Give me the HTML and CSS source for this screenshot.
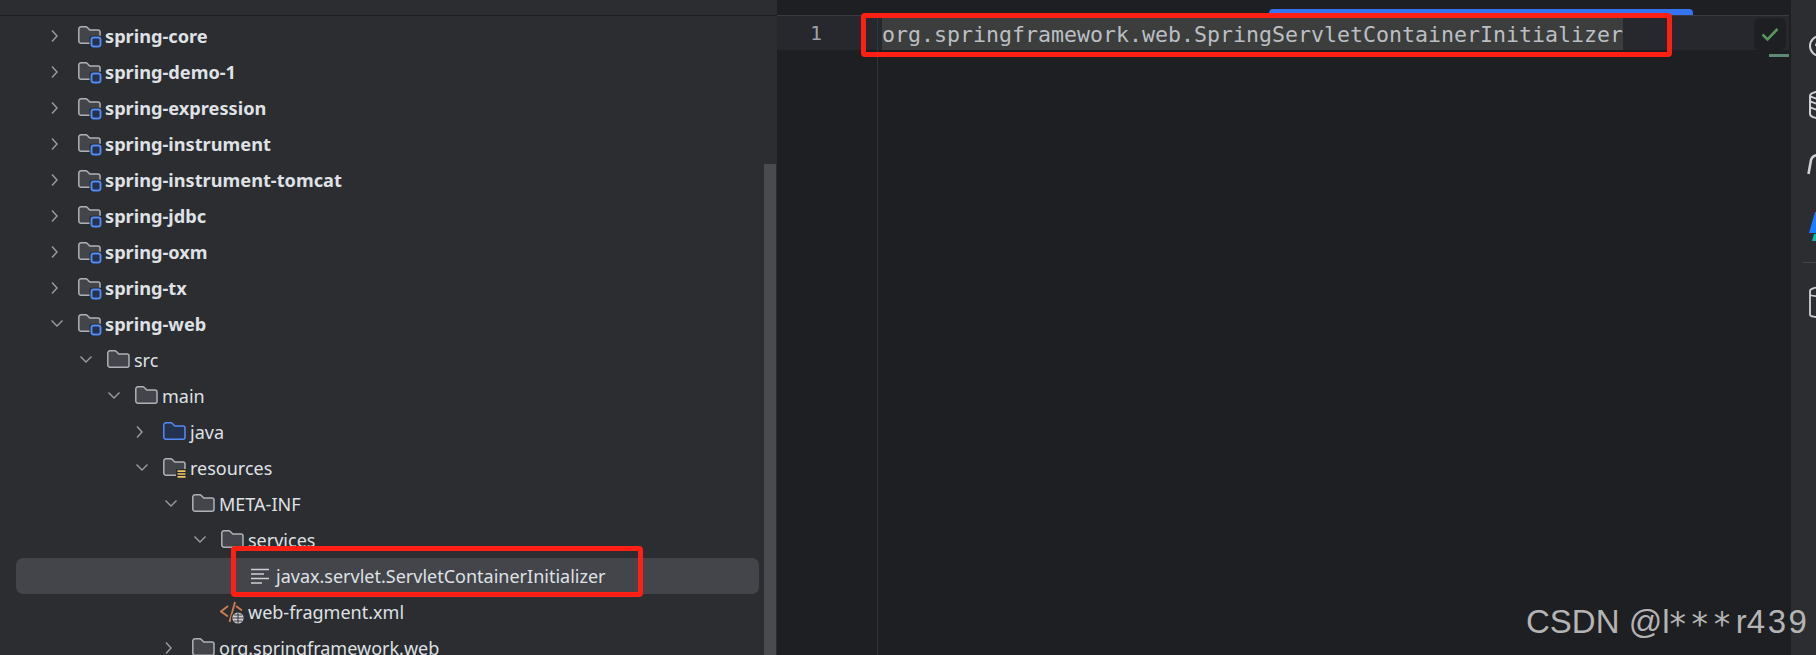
FILE: index.html
```html
<!DOCTYPE html>
<html lang="en">
<head>
<meta charset="utf-8">
<title>Project</title>
<link rel="stylesheet" href="styles.css">
</head>
<body>
<svg class="defs" width="0" height="0" aria-hidden="true">
  <defs>
    <path id="folder" d="M0.8 5a2.2 2.2 0 0 1 2.2-2.2h4.8a2 2 0 0 1 1.500.6l2.500 2.600h8.200a2 2 0 0 1 2 2V17.200a2 2 0 0 1-2 2H3a2.200 2.200 0 0 1-2.200-2.200Z"/>
    <path id="open" d="M4 6.500 9 12l-5 5.500" fill="none" stroke="#9a9da4" stroke-width="1.400"/>
    <path id="down" d="M3.500 8.500 9 14l5.500-5.500" fill="none" stroke="#9a9da4" stroke-width="1.400"/>
    <g id="module">
      <use href="#folder" class="f"/>
      <rect class="halo" x="11.500" y="11.500" width="12.500" height="12.500" rx="3"/>
      <rect class="badge" x="13.500" y="13.500" width="9" height="9" rx="2.200"/>
    </g>
  </defs>
</svg>
<main class="app">
  <section class="tree">
    <div class="row l0"><svg class="chev" viewBox="0 0 18 24"><use href="#open"/></svg><svg class="ico" viewBox="0 0 24 24"><use href="#module"/></svg><span class="name bold">spring-core</span></div>
    <div class="row l0"><svg class="chev" viewBox="0 0 18 24"><use href="#open"/></svg><svg class="ico" viewBox="0 0 24 24"><use href="#module"/></svg><span class="name bold">spring-demo-1</span></div>
    <div class="row l0"><svg class="chev" viewBox="0 0 18 24"><use href="#open"/></svg><svg class="ico" viewBox="0 0 24 24"><use href="#module"/></svg><span class="name bold">spring-expression</span></div>
    <div class="row l0"><svg class="chev" viewBox="0 0 18 24"><use href="#open"/></svg><svg class="ico" viewBox="0 0 24 24"><use href="#module"/></svg><span class="name bold">spring-instrument</span></div>
    <div class="row l0"><svg class="chev" viewBox="0 0 18 24"><use href="#open"/></svg><svg class="ico" viewBox="0 0 24 24"><use href="#module"/></svg><span class="name bold">spring-instrument-tomcat</span></div>
    <div class="row l0"><svg class="chev" viewBox="0 0 18 24"><use href="#open"/></svg><svg class="ico" viewBox="0 0 24 24"><use href="#module"/></svg><span class="name bold">spring-jdbc</span></div>
    <div class="row l0"><svg class="chev" viewBox="0 0 18 24"><use href="#open"/></svg><svg class="ico" viewBox="0 0 24 24"><use href="#module"/></svg><span class="name bold">spring-oxm</span></div>
    <div class="row l0"><svg class="chev" viewBox="0 0 18 24"><use href="#open"/></svg><svg class="ico" viewBox="0 0 24 24"><use href="#module"/></svg><span class="name bold">spring-tx</span></div>
    <div class="row l0"><svg class="chev" viewBox="0 0 18 24"><use href="#down"/></svg><svg class="ico" viewBox="0 0 24 24"><use href="#module"/></svg><span class="name bold">spring-web</span></div>
    <div class="row l1"><svg class="chev" viewBox="0 0 18 24"><use href="#down"/></svg><svg class="ico" viewBox="0 0 24 24"><use href="#folder" class="f"/></svg><span class="name">src</span></div>
    <div class="row l2"><svg class="chev" viewBox="0 0 18 24"><use href="#down"/></svg><svg class="ico" viewBox="0 0 24 24"><use href="#folder" class="f"/></svg><span class="name">main</span></div>
    <div class="row l3"><svg class="chev" viewBox="0 0 18 24"><use href="#open"/></svg><svg class="ico" viewBox="0 0 24 24"><use href="#folder" class="f blue"/></svg><span class="name">java</span></div>
    <div class="row l3"><svg class="chev" viewBox="0 0 18 24"><use href="#down"/></svg><svg class="ico" viewBox="0 0 24 24"><use href="#folder" class="f"/><rect class="halo" x="13" y="13" width="11" height="11"/><path class="res" d="M14.500 15.200h8M14.500 18h8M14.500 20.800h8"/></svg><span class="name">resources</span></div>
    <div class="row l4"><svg class="chev" viewBox="0 0 18 24"><use href="#down"/></svg><svg class="ico" viewBox="0 0 24 24"><use href="#folder" class="f"/></svg><span class="name">META-INF</span></div>
    <div class="row l5"><svg class="chev" viewBox="0 0 18 24"><use href="#down"/></svg><svg class="ico" viewBox="0 0 24 24"><use href="#folder" class="f"/></svg><span class="name">services</span></div>
    <div class="row sel file"><svg class="ico" viewBox="0 0 24 24"><path class="lines" d="M2 5.500h18M2 10h13M2 14.500h18M2 19h11"/></svg><span class="name">javax.servlet.ServletContainerInitializer</span></div>
    <div class="row xml"><svg class="ico" viewBox="0 0 24 24"><path class="tag" d="M8 6 1 11.500 8 16.500M15 2 9.500 22M16 6l6 4.500"/><circle class="halo" cx="18" cy="18" r="7"/><circle class="globe" cx="18" cy="18" r="5.600"/><path class="grid" d="M12.500 18h11M18 12.500v11M14 15h8M14 21h8"/></svg><span class="name">web-fragment.xml</span></div>
    <div class="row l4"><svg class="chev" viewBox="0 0 18 24"><use href="#open"/></svg><svg class="ico" viewBox="0 0 24 24"><use href="#folder" class="f"/></svg><span class="name">org.springframework.web</span></div>
    <div class="scrollbar"></div>
    <div class="mark tree-mark"></div>
  </section>
  <section class="editor">
    <div class="tabstrip"><div class="tabline"></div></div>
    <div class="line">
      <div class="num">1</div>
      <div class="code"><span class="selected">org.springframework.web.SpringServletContainerInitializer</span></div>
    </div>
    <div class="rest"><div class="gutter"></div></div>
    <div class="check"><svg viewBox="0 0 20 20" width="20" height="20"><path d="M2.500 10.500 7.500 15.500 17.500 5" fill="none" stroke="#57965c" stroke-width="2.600"/></svg></div>
    <div class="stripe"></div>
    <div class="mark code-mark"></div>
  </section>
  <aside class="side">
    <svg class="tool t1" viewBox="0 0 30 24"><path d="M1 13a10 10 0 1 1 20 0 10 10 0 1 1-20 0M7 13a5 5 0 0 1 10 0" fill="none" stroke="#ced0d6" stroke-width="2"/></svg>
    <svg class="tool t2" viewBox="0 0 30 30"><path d="M1 6c0-6 24-6 24 0v18c0 6-24 6-24 0ZM1 11c6 4 18 4 24 0M1 17c6 4 18 4 24 0M1 6c6 4 18 4 24 0" fill="none" stroke="#ced0d6" stroke-width="2"/></svg>
    <svg class="tool t3" viewBox="0 0 30 24"><path d="M1.500 21 4 7q1-4 6-5" fill="none" stroke="#ced0d6" stroke-width="2.600"/></svg>
    <svg class="tool t4" viewBox="0 0 30 32"><path d="M0 23 6 2h20v21Z" fill="#1a7dff"/><path d="M5 24h20v7H3Z" fill="#10b6b3"/></svg>
    <div class="sep"></div>
    <svg class="tool t5" viewBox="0 0 30 32"><path d="M1 5c0-5 24-5 24 0v24c0 3-24 3-24 0ZM1 9c6 2 18 2 24 0" fill="none" stroke="#ced0d6" stroke-width="1.800"/></svg>
  </aside>
  <div class="watermark">CSDN @l<span class="stars">***</span>r<span class="digits">439</span></div>
</main>
</body>
</html>
```
FILE: styles.css
```css
* { box-sizing: border-box; }
html, body { margin: 0; height: 100%; background: #1e1f22; overflow: hidden; }
.defs { position: absolute; }
.app { position: relative; display: flex; width: 1816px; height: 655px; overflow: hidden; }

.tree {
  position: relative;
  flex: 0 0 777px;
  height: 655px;
  padding-top: 18px;
  background: #2b2d30;
  overflow: hidden;
  font-family: "Noto Sans", sans-serif;
  color: #dfe1e5;
  font-size: 18px;
}
.tree::before {
  content: "";
  position: absolute;
  left: 0; right: 0; top: 15px;
  height: 1px;
  background: #1e1f22;
}
.row { display: flex; align-items: center; height: 36px; white-space: nowrap; }
.l0 { padding-left: 48px; }
.l1 { padding-left: 77px; }
.l2 { padding-left: 105px; }
.l3 { padding-left: 133px; }
.l4 { padding-left: 162px; }
.l5 { padding-left: 191px; }
.chev { flex: none; width: 18px; height: 24px; margin-right: 12px; }
.ico { flex: none; width: 24px; height: 24px; margin-right: 3px; }
.name { line-height: 36px; }
.bold { font-weight: 700; font-size: 18.200px; }

.f { fill: #43454a; stroke: #aeb1b7; stroke-width: 1.500; }
.blue { fill: #25324d; stroke: #548af7; }
.badge { fill: #25324d; stroke: #548af7; stroke-width: 1.900; }
.halo { fill: #2b2d30; }
.res { stroke: #f2c55c; stroke-width: 1.700; fill: none; }
.lines { stroke: #ced0d6; stroke-width: 1.600; fill: none; }
.tag { stroke: #c77d55; stroke-width: 1.900; fill: none; }
.globe { fill: #ced0d6; }
.grid { stroke: #2b2d30; stroke-width: 0.900; fill: none; }

.sel { position: relative; }
.sel::before {
  content: "";
  position: absolute;
  left: 16px; right: 18px; top: 0; bottom: 0;
  background: #43454a;
  border-radius: 7px;
}
.sel > * { position: relative; }
.file { padding-left: 249px; }
.xml { padding-left: 220px; }
.xml .ico { margin-right: 4px; }

.scrollbar {
  position: absolute;
  left: 764px; top: 164px; bottom: 0;
  width: 12px;
  background: #4a4b4f;
}
.mark { position: absolute; border: 5px solid #ff2015; border-radius: 4px; }
.tree-mark { left: 231px; top: 546px; width: 412px; height: 51px; }

.editor {
  position: relative;
  flex: 1;
  display: flex;
  flex-direction: column;
  background: #1e1f22;
  font-family: "DejaVu Sans Mono", monospace;
  color: #bcbec4;
}
.tabstrip { flex: 0 0 15px; padding: 9px 0 0 492px; }
.tabline { width: 424px; height: 6px; background: #3574f0; border-radius: 4px 4px 0 0; }
.line {
  flex: 0 0 35px;
  display: flex;
  margin-right: 2px;
  background: #26282e;
  border-top: 1px solid #393b40;
}
.num {
  flex: 0 0 101px;
  padding-left: 33px;
  line-height: 34px;
  font-size: 20px;
  color: #9fa2a8;
  border-right: 1px solid #313438;
}
.code { padding-left: 4px; font-size: 21.600px; line-height: 34px; white-space: pre; }
.selected { display: block; height: 34px; line-height: 38px; background: #3b3e3c; }
.rest { flex: 1; }
.gutter { width: 101px; height: 100%; border-right: 1px solid #313438; }
.check {
  position: absolute;
  left: 977px; top: 18px;
  width: 32px; height: 32px;
  display: flex; align-items: center; justify-content: center;
  background: #1e1f22;
  border-radius: 6px;
}
.stripe { position: absolute; left: 992px; top: 54px; width: 20px; height: 3px; background: #5c8a74; }
.code-mark { left: 84px; top: 13px; width: 811px; height: 44px; }

.watermark {
  position: absolute;
  left: 1526px; top: 602px;
  font-family: "Liberation Sans", sans-serif;
  font-size: 33px;
  line-height: 40px;
  color: #b4b4b4;
  white-space: nowrap;
}
.stars { font-family: "DejaVu Sans", sans-serif; letter-spacing: 5.600px; vertical-align: -3px; }
.digits { letter-spacing: 2.500px; }

.side {
  flex: 0 0 25px;
  display: flex;
  flex-direction: column;
  padding: 33px 0 0 18px;
  background: #2b2d30;
  overflow: hidden;
}
.tool { flex: none; display: block; width: 30px; }
.t1 { height: 24px; }
.t2 { height: 30px; margin-top: 33px; }
.t3 { height: 24px; margin-top: 33px; margin-left: -2px; }
.t4 { height: 32px; margin-top: 33px; }
.sep { flex: none; width: 14px; height: 1px; margin: 20px 0 0 -6px; background: #43454a; }
.t5 { height: 32px; margin-top: 23px; }
```
